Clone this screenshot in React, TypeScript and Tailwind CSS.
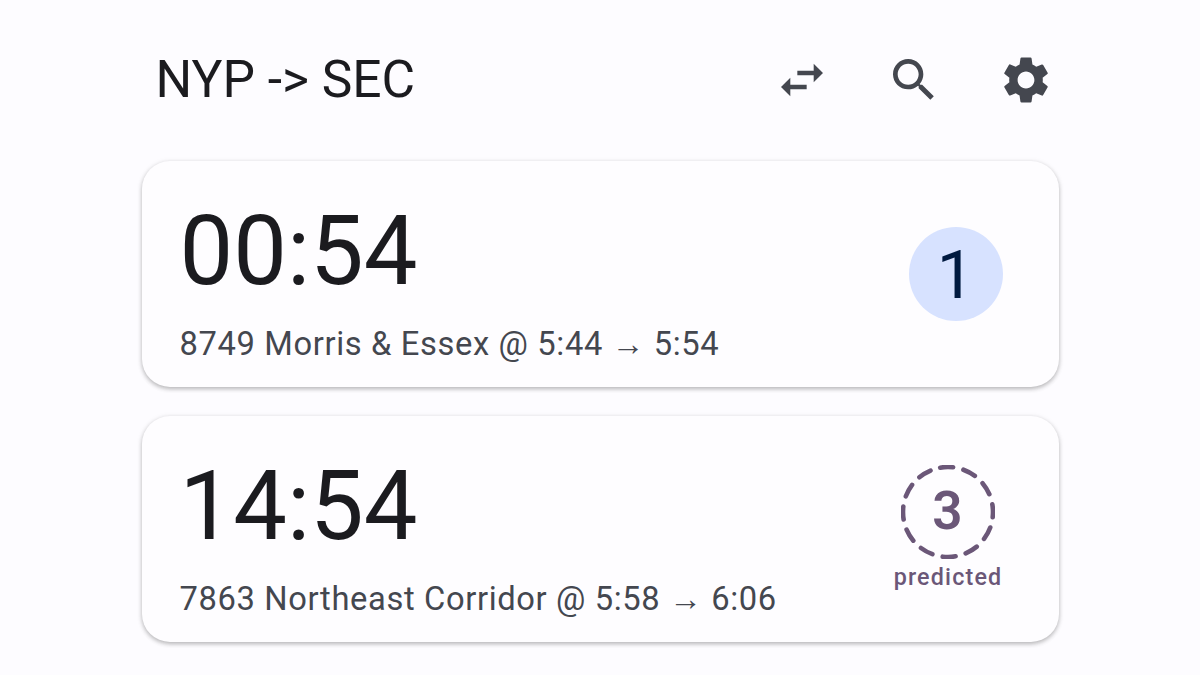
import React from "react";

const ICON_PATHS = {
  swap: "M6.99 11L3 15l3.99 4v-3H14v-2H6.99v-3zM21 9l-3.99-4v3H10v2h7.01v3L21 9z",
  search:
    "M15.5 14h-.79l-.28-.27C15.41 12.59 16 11.11 16 9.5 16 5.91 13.09 3 9.5 3S3 5.91 3 9.5 5.91 16 9.5 16c1.61 0 3.09-.59 4.23-1.57l.27.28v.79l5 4.99L20.49 19l-4.99-5zm-6 0C7.01 14 5 11.99 5 9.5S7.01 5 9.5 5 14 7.01 14 9.5 11.99 14 9.5 14z",
  settings:
    "M19.14 12.94c.04-.3.06-.61.06-.94 0-.32-.02-.64-.07-.94l2.03-1.58c.18-.14.23-.41.12-.61l-1.92-3.32c-.12-.22-.37-.29-.59-.22l-2.39.96c-.5-.38-1.03-.7-1.62-.94l-.36-2.54c-.04-.24-.24-.41-.48-.41h-3.84c-.24 0-.43.17-.47.41l-.36 2.54c-.59.24-1.13.57-1.62.94l-2.39-.96c-.22-.08-.47 0-.59.22L2.74 8.87c-.12.21-.08.47.12.61l2.03 1.58c-.05.3-.09.63-.09.94s.02.64.07.94l-2.03 1.58c-.18.14-.23.41-.12.61l1.92 3.32c.12.22.37.29.59.22l2.39-.96c.5.38 1.03.7 1.62.94l.36 2.54c.05.24.24.41.48.41h3.84c.24 0 .44-.17.47-.41l.36-2.54c.59-.24 1.13-.56 1.62-.94l2.39.96c.22.08.47 0 .59-.22l1.92-3.32c.12-.22.07-.47-.12-.61l-2.01-1.58zM12 15.6c-1.98 0-3.6-1.62-3.6-3.6s1.62-3.6 3.6-3.6 3.6 1.62 3.6 3.6-1.62 3.6-3.6 3.6z",
};

const IconButton = ({ path }: { path: string }) => (
  <div className="flex h-[112px] w-[112px] items-center justify-center">
    <svg viewBox="0 0 24 24" className="h-14 w-14 fill-[#44474f]">
      <path d={path} />
    </svg>
  </div>
);

const TrainCard = ({
  time,
  detail,
  children,
}: {
  time: string;
  detail: string;
  children: React.ReactNode;
}) => (
  <div className="flex h-[226px] items-center justify-between rounded-[28px] bg-[#fefdff] pl-[38px] pr-[56px] shadow-[0_2px_4px_rgba(0,0,0,0.24),0_1px_6px_rgba(0,0,0,0.08)]">
    <div className="flex flex-col">
      <div className="mt-[10px] text-[95.6px] leading-[112px] text-[#1b1b1f]">{time}</div>
      <div className="mt-[17px] text-[32.7px] leading-[40px] tracking-[0.64px] text-[#44474f]">
        {detail}
      </div>
    </div>
    {children}
  </div>
);

export default function App() {
  return (
    <div className="flex h-[675px] w-[1200px] flex-col overflow-hidden bg-[#fdfcff] px-[141.5px] font-['Roboto',sans-serif]">
      <div className="mt-[24px] mr-[-23px] flex h-[112px] items-center justify-between pl-[14px]">
        <div className="text-[51.5px] text-[#1b1b1f]">NYP -&gt; SEC</div>
        <div className="flex">
          <IconButton path={ICON_PATHS.swap} />
          <IconButton path={ICON_PATHS.search} />
          <IconButton path={ICON_PATHS.settings} />
        </div>
      </div>
      <div className="mt-[25px] flex flex-col gap-[29px]">
        <TrainCard time="00:54" detail="8749 Morris & Essex @ 5:44 → 5:54">
          <div className="flex h-[94px] w-[94px] items-center justify-center rounded-full bg-[#d7e2ff] pt-[3px] text-[67px] text-[#001a40]">
            1
          </div>
        </TrainCard>
        <TrainCard time="14:54" detail="7863 Northeast Corridor @ 5:58 → 6:06">
          <div className="mr-[1px] flex w-[108px] flex-col items-center">
            <div className="relative mt-[-2px] flex h-[94px] w-[94px] items-center justify-center pb-[1px] text-[53px] font-semibold text-[#6b5778]">
              <svg viewBox="0 0 94 94" className="absolute inset-0 h-full w-full fill-none stroke-[#6b5778]">
                <circle cx="47" cy="47" r="45" strokeWidth="4.6" strokeLinecap="round" strokeDasharray="13 10.56" transform="rotate(-100 47 47)" />
              </svg>
              3
            </div>
            <div className="mt-[4px] ml-[1px] text-[23.3px] font-medium leading-[28px] tracking-[1.17px] text-[#6b5778]">
              predicted
            </div>
          </div>
        </TrainCard>
      </div>
    </div>
  );
}
